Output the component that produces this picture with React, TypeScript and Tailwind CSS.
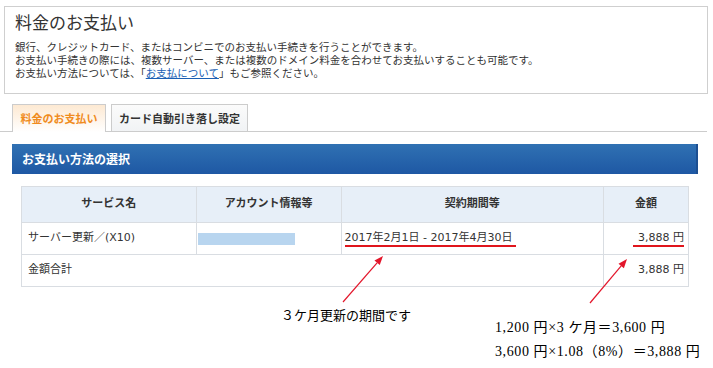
import React from 'react'

const rows = [
  { service: 'サーバー更新／(X10)', period: '2017年2月1日 - 2017年4月30日', amount: '3,888 円' },
]

export default function App() {
  return (
    <div
      className="relative w-[713px] h-[368px] overflow-hidden bg-white text-[#333]"
      style={{ fontFamily: '"DejaVu Sans", "Noto Sans CJK JP", sans-serif' }}
    >
      {/* intro box */}
      <div className="mx-[4px] mt-[6px] h-[88px] w-[704px] border border-[#cfcfcf] px-[10px] pt-[5px]">
        <h1 className="text-[17px] leading-[20px] font-normal" style={{ fontFamily: '"Noto Sans CJK JP", sans-serif' }}>
          料金のお支払い
        </h1>
        <div className="mt-[8px] text-[10.5px] leading-[13px]" style={{ fontFamily: '"Noto Sans CJK JP", sans-serif' }}>
          <p>銀行、クレジットカード、またはコンビニでのお支払い手続きを行うことができます。</p>
          <p>お支払い手続きの際には、複数サーバー、または複数のドメイン料金を合わせてお支払いすることも可能です。</p>
          <p>
            お支払い方法については、「<span className="text-[#1a5fb4] underline">お支払について</span>」もご参照ください。
          </p>
        </div>
      </div>

      {/* tabs */}
      <div className="mt-[10px] flex w-[707px] items-end border-b border-[#cccccc] pl-[12px]">
        <Tab label="料金のお支払い" active />
        <Tab label="カード自動引き落し設定" />
      </div>

      {/* section bar */}
      <div className="mx-[12px] mt-[12px] flex h-[30px] w-[686px] items-center border-r-2 border-[#1d4f91] bg-gradient-to-b from-[#3071b3] to-[#1e58a4] pl-[10px] text-[12px] font-bold text-white" style={{ fontFamily: '"Noto Sans CJK JP", sans-serif' }}>
        お支払い方法の選択
      </div>

      {/* table */}
      <table
        className="mt-[12px] ml-[21px] w-[668px] border-collapse text-[11px] text-[#333]"
        style={{ fontFamily: '"DejaVu Sans", "Noto Sans CJK JP", sans-serif' }}
      >
        <thead>
          <tr className="h-[36px] bg-[#e7eff8]">
            <th className="w-[175px] border border-[#d9dde2] font-bold">サービス名</th>
            <th className="w-[145px] border border-[#d9dde2] font-bold">アカウント情報等</th>
            <th className="w-[263px] border border-[#d9dde2] font-bold">契約期間等</th>
            <th className="w-[85px] border border-[#d9dde2] font-bold">金額</th>
          </tr>
        </thead>
        <tbody>
          {rows.map((r) => (
            <tr key={r.service} className="h-[32px]">
              <td className="border border-[#d9dde2] pl-[6px]">{r.service}</td>
              <td className="border border-[#d9dde2] pl-[1px]">
                <div className="h-[12px] w-[97px] bg-[#b8d5ef]" />
              </td>
              <td className="border border-[#d9dde2] pl-[3px]">
                <span className="inline-block border-b-2 border-[#e0151c] pr-[3px] leading-[15px]">{r.period}</span>
              </td>
              <td className="border border-[#d9dde2] pr-[4px] text-right">
                <span className="inline-block border-b-2 border-[#e0151c] pl-[5px] leading-[15px]">{r.amount}</span>
              </td>
            </tr>
          ))}
          <tr className="h-[32px]">
            <td colSpan={3} className="border border-[#d9dde2] pl-[6px]">金額合計</td>
            <td className="border border-[#d9dde2] pr-[4px] text-right">3,888 円</td>
          </tr>
        </tbody>
      </table>

      {/* annotations */}
      <div
        className="flex text-black"
        style={{ fontFamily: '"Liberation Serif", "Noto Sans CJK JP", serif' }}
      >
        <p className="ml-[281px] mt-[20px] text-[13px] leading-[18px]">３ケ月更新の期間です</p>
        <div className="ml-[84px] mt-[29px] text-[14px] leading-[24px] tracking-[0.6px]">
          <p>1,200 円×3 ケ月＝3,600 円</p>
          <p>3,600 円×1.08（8%）＝3,888 円</p>
        </div>
      </div>

      <svg className="pointer-events-none absolute left-0 top-0" width="713" height="368">
        <Arrow x1={343} y1={302} x2={383} y2={256} />
        <Arrow x1={590} y1={303} x2={627} y2={259} />
      </svg>
    </div>
  )
}

function Tab({ label, active }: { label: string; active?: boolean }) {
  return (
    <div
      className={
        active
          ? '-mb-px flex h-[28px] w-[94px] items-center justify-center border border-b-0 border-[#cccccc] bg-gradient-to-b from-[#fde9d2] to-white text-[11px] font-bold text-[#f08c1e]'
          : 'ml-[5px] -mb-px flex h-[28px] w-[137px] items-center justify-center border border-[#cccccc] bg-gradient-to-b from-[#fbfbfb] to-[#f1f3f5] text-[11px] font-bold text-[#333]'
      }
      style={{ fontFamily: '"Noto Sans CJK JP", sans-serif' }}
    >
      {label}
    </div>
  )
}

function Arrow({ x1, y1, x2, y2 }: { x1: number; y1: number; x2: number; y2: number }) {
  const a = Math.atan2(y2 - y1, x2 - x1)
  const len = 9
  const w = 3.5
  const bx = x2 - len * Math.cos(a)
  const by = y2 - len * Math.sin(a)
  const px = -Math.sin(a) * w
  const py = Math.cos(a) * w
  return (
    <g>
      <line x1={x1} y1={y1} x2={bx} y2={by} stroke="#e3162b" strokeWidth={1.2} />
      <polygon points={`${x2},${y2} ${bx + px},${by + py} ${bx - px},${by - py}`} fill="#e3162b" />
    </g>
  )
}
